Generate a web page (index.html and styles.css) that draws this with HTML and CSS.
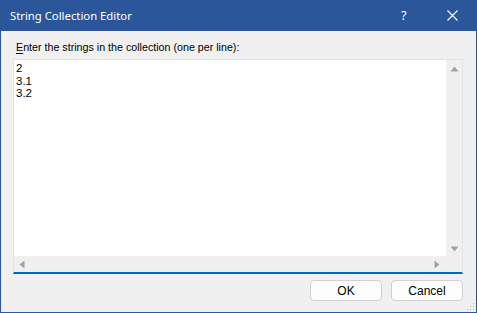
FILE: index.html
```html
<!DOCTYPE html>
<html lang="en">
<head>
  <meta charset="UTF-8" />
  <title>String Collection Editor</title>
  <link rel="stylesheet" href="styles.css">
</head>
<body>

  <div class="window">
    <!-- title bar -->
    <div class="titlebar">
      <span class="title">String Collection Editor</span>
      <span class="help">?</span>
      <span class="close">
        <svg width="11" height="11" viewBox="0 0 11 11"><path d="M0.5 0.5 L10.5 10.5 M10.5 0.5 L0.5 10.5" stroke="#fff" stroke-width="1.1" fill="none"/></svg>
      </span>
    </div>

    <div class="content">
      <div class="label"><u>E</u>nter the strings in the collection (one per line):</div>

      <div class="editor">
        <div class="text">2<br>3.1<br>3.2</div>
        <div class="vscroll">
          <svg width="9" height="6" viewBox="0 0 9 6"><path d="M4.5 0.5 L8.5 5.5 L0.5 5.5 Z" fill="#a3a3a3"/></svg>
          <svg width="9" height="6" viewBox="0 0 9 6"><path d="M0.5 0.5 L8.5 0.5 L4.5 5.5 Z" fill="#a3a3a3"/></svg>
        </div>
        <div class="hscroll">
          <svg width="6" height="9" viewBox="0 0 6 9"><path d="M0.5 4.5 L5.5 0.5 L5.5 8.5 Z" fill="#a3a3a3"/></svg>
          <svg width="6" height="9" viewBox="0 0 6 9"><path d="M0.5 0.5 L5.5 4.5 L0.5 8.5 Z" fill="#a3a3a3"/></svg>
        </div>
        <div class="corner"></div>
      </div>

      <div class="buttons">
        <button class="btn">OK</button>
        <button class="btn">Cancel</button>
      </div>
    </div>

    <svg class="grip" width="8" height="8" viewBox="0 0 8 8">
      <rect x="6" y="0" width="1" height="1" fill="#b8b8b8"/>
      <rect x="3" y="3" width="1" height="1" fill="#b8b8b8"/>
      <rect x="6" y="3" width="1" height="1" fill="#b8b8b8"/>
      <rect x="0" y="6" width="1" height="1" fill="#b8b8b8"/>
      <rect x="3" y="6" width="1" height="1" fill="#b8b8b8"/>
      <rect x="6" y="6" width="1" height="1" fill="#b8b8b8"/>
    </svg>
  </div>

</body>
</html>
```

FILE: styles.css
```css
* {
  margin: 0;
  padding: 0;
  box-sizing: border-box;
}

body {
  background-color: #f0f0f0;
  font-family: "Liberation Sans", sans-serif;
}

.window {
  position: relative;
  width: 477px;
  height: 313px;
  border: 1px solid #2b579a;
  background-color: #f0f0f0;
  display: flex;
  flex-direction: column;
}

.titlebar {
  height: 30px;
  background-color: #2b579a;
  color: #fff;
  display: flex;
  align-items: center;
  padding-left: 9px;
}

.title {
  font-family: "Noto Sans", sans-serif;
  font-size: 11.3px;
  flex: 1;
  margin-top: -1px;
}

.help {
  font-family: "Noto Sans", sans-serif;
  font-size: 13px;
  width: 12px;
  margin-right: 34px;
  margin-top: -2px;
}

.close {
  display: flex;
  margin-right: 18px;
  margin-top: -1px;
}

.content {
  flex: 1;
  display: flex;
  flex-direction: column;
  padding: 9px 13px 0 12px;
}

.label {
  font-size: 10.7px;
  color: #000;
  padding-left: 3px;
  padding-top: 1px;
  height: 19px;
}

.label u {
  text-underline-offset: 2px;
}

.editor {
  display: grid;
  grid-template-columns: 432px 16px;
  grid-template-rows: 196px 16px;
  border: 1px solid #e3e3e3;
  border-bottom: 2px solid #0067c0;
  width: 450px;
}

.text {
  background-color: #fff;
  font-size: 11.5px;
  line-height: 12.5px;
  padding: 2px 0 0 2px;
  color: #000;
}

.vscroll {
  background-color: #f0f0f0;
  display: flex;
  flex-direction: column;
  justify-content: space-between;
  align-items: center;
  padding: 6px 0 4px;
}

.hscroll {
  background-color: #f0f0f0;
  display: flex;
  justify-content: space-between;
  align-items: center;
  padding: 0 6px 0 5px;
}

.corner {
  background-color: #f0f0f0;
}

.buttons {
  display: flex;
  justify-content: flex-end;
  gap: 9px;
  margin-top: 6px;
}

.btn {
  width: 72px;
  height: 21px;
  border: 1px solid #d0d0d0;
  border-radius: 4px;
  background-color: #fdfdfd;
  font-family: "Liberation Sans", sans-serif;
  font-size: 12px;
  color: #000;
}

.grip {
  position: absolute;
  right: 1px;
  bottom: 1px;
}
```
